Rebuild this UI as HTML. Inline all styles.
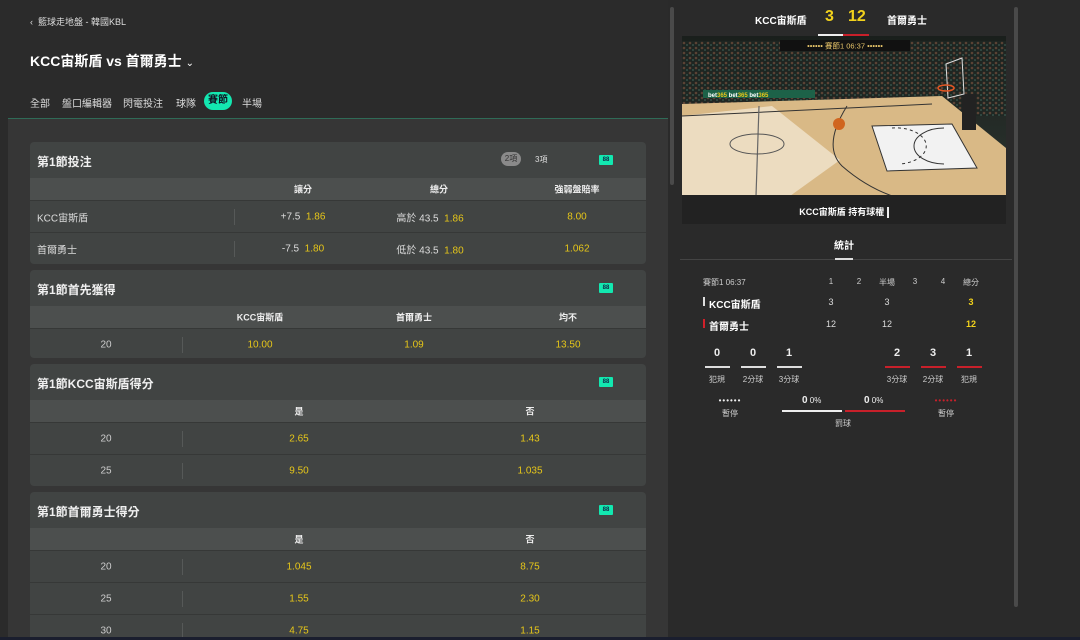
<!DOCTYPE html>
<html style="width:1080px;height:640px;overflow:hidden"><head><meta charset="utf-8"><style>
*{margin:0;padding:0;box-sizing:border-box}
body{width:1080px;height:640px;overflow:hidden;background:#2a2a2a;font-family:"Liberation Sans","Noto Sans CJK TC",sans-serif;color:#ddd;position:relative;font-size:10px}
.a{position:absolute}
.y{color:#e6c619}
.card{position:absolute;left:30px;width:616px;background:#414443;border-radius:4px;overflow:hidden}
.ch{height:36px;font-size:12px;font-weight:bold;color:#f0f0f0;padding:11px 0 0 7px;position:relative}
.bb{position:absolute;right:33px;top:13px;width:14px;height:10px;background:#12e8b0;border-radius:1px;font-size:6px;color:#124;text-align:center;line-height:10px;font-weight:bold}
.hr{height:22px;background:#4c4f4e;position:relative;font-weight:bold;color:#eee;font-size:9px}
.row{height:32px;border-top:1px solid #363837;position:relative;font-size:10px}
.hr span,.row span{position:absolute;top:50%;transform:translate(-50%,-50%);white-space:nowrap}
.sep{position:absolute;top:8px;height:16px;width:1px;background:#565958}
</style></head><body>
<div class="a" style="left:0;top:0;width:668px;height:640px;background:#2b2b2b"></div>
<div class="a" style="left:30px;top:15px;font-size:9px;color:#ddd">‹&nbsp; 籃球走地盤 - 韓國KBL</div>
<div class="a" style="left:30px;top:51px;font-size:14px;font-weight:bold;color:#fff">KCC宙斯盾 vs 首爾勇士 <span style="font-size:10px;font-weight:normal">⌄</span></div>
<div class="a" style="left:30px;top:95px;font-size:10px;color:#ddd">全部</div>
<div class="a" style="left:62px;top:95px;font-size:10px;color:#ddd">盤口編輯器</div>
<div class="a" style="left:123px;top:95px;font-size:10px;color:#ddd">閃電投注</div>
<div class="a" style="left:176px;top:95px;font-size:10px;color:#ddd">球隊</div>
<div class="a" style="left:204px;top:92px;width:28px;height:18px;border-radius:9px;background:#13e7b0;color:#112;font-size:10px;text-align:center;line-height:18px;font-weight:bold">賽節</div>
<div class="a" style="left:242px;top:95px;font-size:10px;color:#ddd">半場</div>
<div class="a" style="left:8px;top:118px;width:660px;height:522px;background:#363636;border-top:1px solid #2f6b57"></div>

<div class="card" style="top:142px;height:122px">
<div class="ch">第1節投注<div class="a" style="left:471px;top:10px;width:20px;height:14px;border-radius:7px;background:#8a8a8a;font-size:8px;text-align:center;line-height:14px;font-weight:normal;color:#333">2項</div><div class="a" style="left:505px;top:12px;font-size:8px;font-weight:normal;color:#ddd">3項</div><div class="bb">88</div></div>
<div class="hr"><span style="left:273px">讓分</span><span style="left:409px">總分</span><span style="left:547px">強弱盤賠率</span></div>
<div class="row"><span style="left:7px;transform:translate(0,-50%)">KCC宙斯盾</span><div class="sep" style="left:204px"></div><span style="left:273px">+7.5 &nbsp;<b class="y" style="font-weight:normal">1.86</b></span><span style="left:400px">高於 43.5 &nbsp;<b class="y" style="font-weight:normal">1.86</b></span><span class="y" style="left:547px">8.00</span></div>
<div class="row"><span style="left:7px;transform:translate(0,-50%)">首爾勇士</span><div class="sep" style="left:204px"></div><span style="left:273px">-7.5 &nbsp;<b class="y" style="font-weight:normal">1.80</b></span><span style="left:400px">低於 43.5 &nbsp;<b class="y" style="font-weight:normal">1.80</b></span><span class="y" style="left:547px">1.062</span></div>
</div>

<div class="card" style="top:270px;height:88px">
<div class="ch">第1節首先獲得<div class="bb">88</div></div>
<div class="hr"><span style="left:230px">KCC宙斯盾</span><span style="left:384px">首爾勇士</span><span style="left:538px">均不</span></div>
<div class="row"><span style="left:76px;color:#ccc">20</span><div class="sep" style="left:152px"></div><span class="y" style="left:230px">10.00</span><span class="y" style="left:384px">1.09</span><span class="y" style="left:538px">13.50</span></div>
</div>

<div class="card" style="top:364px;height:122px">
<div class="ch">第1節KCC宙斯盾得分<div class="bb">88</div></div>
<div class="hr"><span style="left:269px">是</span><span style="left:500px">否</span></div>
<div class="row"><span style="left:76px;color:#ccc">20</span><div class="sep" style="left:152px"></div><span class="y" style="left:269px">2.65</span><span class="y" style="left:500px">1.43</span></div>
<div class="row"><span style="left:76px;color:#ccc">25</span><div class="sep" style="left:152px"></div><span class="y" style="left:269px">9.50</span><span class="y" style="left:500px">1.035</span></div>
</div>

<div class="card" style="top:492px;height:148px;border-radius:4px 4px 0 0">
<div class="ch">第1節首爾勇士得分<div class="bb">88</div></div>
<div class="hr"><span style="left:269px">是</span><span style="left:500px">否</span></div>
<div class="row"><span style="left:76px;color:#ccc">20</span><div class="sep" style="left:152px"></div><span class="y" style="left:269px">1.045</span><span class="y" style="left:500px">8.75</span></div>
<div class="row"><span style="left:76px;color:#ccc">25</span><div class="sep" style="left:152px"></div><span class="y" style="left:269px">1.55</span><span class="y" style="left:500px">2.30</span></div>
<div class="row"><span style="left:76px;color:#ccc">30</span><div class="sep" style="left:152px"></div><span class="y" style="left:269px">4.75</span><span class="y" style="left:500px">1.15</span></div>
</div>

<div class="a" style="left:668px;top:0;width:12px;height:640px;background:#2a2a2a"></div>
<div class="a" style="left:670px;top:7px;width:4px;height:178px;background:#4a4a4a;border-radius:2px"></div>
<div class="a" style="left:1014px;top:7px;width:4px;height:600px;background:#4a4a4a;border-radius:2px"></div>
<div class="a" style="left:1020px;top:0;width:60px;height:640px;background:#2a2a2a"></div>
<div class="a" style="left:0;top:637px;width:1080px;height:3px;background:#1a1e2e"></div>

<div class="a" style="left:755px;top:12px;font-size:10px;font-weight:bold;color:#fff">KCC宙斯盾</div>
<div class="a" style="left:825px;top:8px;font-size:16px;font-weight:bold;color:#f2d21c">3</div>
<div class="a" style="left:848px;top:8px;font-size:16px;font-weight:bold;color:#f2d21c">12</div>
<div class="a" style="left:887px;top:12px;font-size:10px;font-weight:bold;color:#fff">首爾勇士</div>
<div class="a" style="left:818px;top:34px;width:25px;height:2px;background:#eee"></div>
<div class="a" style="left:843px;top:34px;width:26px;height:2px;background:#c8202a"></div>
<svg class="a" style="left:682px;top:36px" width="324" height="160" viewBox="0 0 324 160">
<defs><linearGradient id="cr" x1="0" y1="0" x2="0" y2="1"><stop offset="0" stop-color="#1a1f1c"/><stop offset="1" stop-color="#2c3530"/></linearGradient>
<pattern id="pp" width="6" height="5" patternUnits="userSpaceOnUse"><rect width="6" height="5" fill="#1e2622"/><circle cx="2" cy="2" r="1.3" fill="#6a4a3a"/><circle cx="5" cy="4" r="1" fill="#3a5a50"/></pattern></defs>
<rect width="324" height="160" fill="url(#cr)"/>
<rect y="5" width="324" height="75" fill="url(#pp)" opacity="0.8"/>
<polygon points="0,68 260,60 324,112 324,160 0,160" fill="#d9b986"/>
<polygon points="0,80 90,70 158,124 108,160 0,160" fill="#ecdcc0"/>
<rect x="21" y="54" width="112" height="8" fill="#1d6248"/>
<text x="26" y="61" font-size="6" fill="#fff" font-weight="bold" font-family="Liberation Sans">bet<tspan fill="#e6c619">365</tspan>   bet<tspan fill="#e6c619">365</tspan>   bet<tspan fill="#e6c619">365</tspan></text>
<line x1="0" y1="80" x2="250" y2="68" stroke="#333" stroke-width="1"/>
<line x1="77" y1="70" x2="74" y2="160" stroke="#666" stroke-width="1.2"/>
<ellipse cx="75" cy="108" rx="27" ry="10" fill="none" stroke="#555" stroke-width="1"/>
<path d="M165 70 Q140 110 160 130 Q200 165 250 168" fill="none" stroke="#333" stroke-width="1"/>
<polygon points="190,90 270,88 295,132 205,135" fill="#f2f2f2" stroke="#333"/>
<path d="M210 92 A20 12 0 0 1 218 128" fill="none" stroke="#333" stroke-dasharray="3 3"/>
<path d="M262 92 A20 12 0 0 0 262 128" fill="none" stroke="#333"/>
<rect x="280" y="58" width="14" height="36" fill="#222"/>
<polygon points="264,28 280,22 282,58 266,62" fill="none" stroke="#ddd"/>
<ellipse cx="264" cy="52" rx="8" ry="3" fill="none" stroke="#e25522" stroke-width="1.5"/>
<circle cx="157" cy="88" r="6" fill="#d0651f"/>
<rect x="98" y="4" width="130" height="11" fill="#111"/>
<text x="163" y="12.5" font-size="7.5" fill="#e8c56a" text-anchor="middle" font-family="Liberation Sans,Noto Sans CJK TC">•••••• 賽節1 06:37 ••••••</text>
</svg>
<div class="a" style="left:682px;top:195px;width:324px;height:29px;background:#222"></div>
<div class="a" style="left:682px;top:205px;width:324px;text-align:center;font-size:9px;font-weight:bold;color:#fff">KCC宙斯盾 持有球權 <span style="display:inline-block;width:2px;height:11px;background:#eee;vertical-align:middle"></span></div>
<div class="a" style="left:834px;top:237px;font-size:10px;font-weight:bold;color:#fff">統計</div>
<div class="a" style="left:680px;top:259px;width:332px;height:1px;background:#444"></div>
<div class="a" style="left:835px;top:258px;width:18px;height:2px;background:#ddd"></div>

<div class="a" style="left:703px;top:277px;font-size:8px;color:#ccc">賽節1 06:37</div>
<div style="font-size:8px;color:#ccc">
<div class="a" style="left:831px;top:277px;transform:translateX(-50%)">1</div>
<div class="a" style="left:859px;top:277px;transform:translateX(-50%)">2</div>
<div class="a" style="left:887px;top:277px;transform:translateX(-50%)">半場</div>
<div class="a" style="left:915px;top:277px;transform:translateX(-50%)">3</div>
<div class="a" style="left:943px;top:277px;transform:translateX(-50%)">4</div>
<div class="a" style="left:971px;top:277px;transform:translateX(-50%)">總分</div>
</div>
<div class="a" style="left:703px;top:297px;width:2px;height:9px;background:#ddd"></div>
<div class="a" style="left:709px;top:296px;font-size:10px;font-weight:bold;color:#fff">KCC宙斯盾</div>
<div class="a" style="left:703px;top:319px;width:2px;height:9px;background:#d0202a"></div>
<div class="a" style="left:709px;top:318px;font-size:10px;font-weight:bold;color:#fff">首爾勇士</div>
<div style="font-size:9px;color:#ddd">
<div class="a" style="left:831px;top:297px;transform:translateX(-50%)">3</div>
<div class="a" style="left:887px;top:297px;transform:translateX(-50%)">3</div>
<div class="a" style="left:971px;top:297px;transform:translateX(-50%);color:#f2d21c;font-weight:bold">3</div>
<div class="a" style="left:831px;top:319px;transform:translateX(-50%)">12</div>
<div class="a" style="left:887px;top:319px;transform:translateX(-50%)">12</div>
<div class="a" style="left:971px;top:319px;transform:translateX(-50%);color:#f2d21c;font-weight:bold">12</div>
</div>

<div style="font-size:11px;font-weight:bold;color:#eee">
<div class="a" style="left:717px;top:347px;transform:translateX(-50%)">0</div>
<div class="a" style="left:753px;top:347px;transform:translateX(-50%)">0</div>
<div class="a" style="left:789px;top:347px;transform:translateX(-50%)">1</div>
<div class="a" style="left:897px;top:347px;transform:translateX(-50%)">2</div>
<div class="a" style="left:933px;top:347px;transform:translateX(-50%)">3</div>
<div class="a" style="left:969px;top:347px;transform:translateX(-50%)">1</div>
</div>
<div class="a" style="left:705px;top:366px;width:25px;height:2px;background:#ddd"></div>
<div class="a" style="left:741px;top:366px;width:25px;height:2px;background:#ddd"></div>
<div class="a" style="left:777px;top:366px;width:25px;height:2px;background:#ddd"></div>
<div class="a" style="left:885px;top:366px;width:25px;height:2px;background:#c8202a"></div>
<div class="a" style="left:921px;top:366px;width:25px;height:2px;background:#c8202a"></div>
<div class="a" style="left:957px;top:366px;width:25px;height:2px;background:#c8202a"></div>
<div style="font-size:8px;color:#ccc">
<div class="a" style="left:717px;top:374px;transform:translateX(-50%)">犯規</div>
<div class="a" style="left:753px;top:374px;transform:translateX(-50%)">2分球</div>
<div class="a" style="left:789px;top:374px;transform:translateX(-50%)">3分球</div>
<div class="a" style="left:897px;top:374px;transform:translateX(-50%)">3分球</div>
<div class="a" style="left:933px;top:374px;transform:translateX(-50%)">2分球</div>
<div class="a" style="left:969px;top:374px;transform:translateX(-50%)">犯規</div>
<div class="a" style="left:730px;top:396px;transform:translateX(-50%);color:#eee;font-size:8px;letter-spacing:1px">••••••</div>
<div class="a" style="left:730px;top:408px;transform:translateX(-50%)">暫停</div>
<div class="a" style="left:946px;top:396px;transform:translateX(-50%);color:#c8202a;font-size:8px;letter-spacing:1px">••••••</div>
<div class="a" style="left:946px;top:408px;transform:translateX(-50%)">暫停</div>
<div class="a" style="left:802px;top:395px;color:#eee"><b style="font-size:10px">0</b> 0%</div>
<div class="a" style="left:864px;top:395px;color:#eee"><b style="font-size:10px">0</b> 0%</div>
<div class="a" style="left:843px;top:418px;transform:translateX(-50%)">罰球</div>
</div>
<div class="a" style="left:782px;top:410px;width:60px;height:2px;background:#eee"></div>
<div class="a" style="left:845px;top:410px;width:60px;height:2px;background:#c8202a"></div>
</body></html>
